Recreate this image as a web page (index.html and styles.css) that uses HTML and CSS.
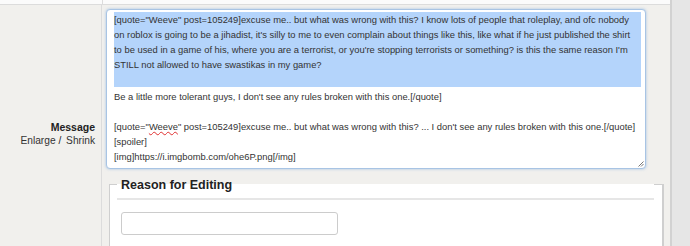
FILE: index.html
```html
<!DOCTYPE html>
<html lang="en">
<head>
  <meta charset="UTF-8">
  <title>Edit post</title>
  <link rel="stylesheet" href="styles.css">
</head>
<body>

<div class="page">
  <div class="form">
    <div class="top-row">
      <div class="top-label"></div>
      <div class="top-field"></div>
    </div>

    <div class="row">
      <div class="label">
        <strong>Message</strong>
        <span class="resize-links"><a>Enlarge</a> / <a class="shrink">Shrink</a></span>
      </div>

      <div class="field">
        <div class="textarea">
          <div class="selection">
            <div class="line">[quote="Weeve" post=105249]excuse me.. but what was wrong with this? I know lots of people that roleplay, and ofc nobody</div>
            <div class="line">on roblox is going to be a jihadist, it's silly to me to even complain about things like this, like what if he just published the shirt</div>
            <div class="line">to be used in a game of his, where you are a terrorist, or you're stopping terrorists or something? is this the same reason I'm</div>
            <div class="line">STILL not allowed to have swastikas in my game?</div>
            <div class="line">&nbsp;</div>
          </div>
          <div class="line">Be a little more tolerant guys, I don't see any rules broken with this one.[/quote]</div>
          <div class="line">&nbsp;</div>
          <div class="line">[quote="<span class="typo">Weeve</span>" post=105249]excuse me.. but what was wrong with this? ... I don't see any rules broken with this one.[/quote]</div>
          <div class="line">[spoiler]</div>
          <div class="line">[img]https://i.imgbomb.com/ohe6P.png[/img]</div>
          <svg class="grip" width="6" height="6" viewBox="0 0 6 6">
            <path d="M0.5 5.5 L5.5 0.5 M3 5.5 L5.5 3" stroke="#777" stroke-width="1" fill="none"/>
          </svg>
        </div>

        <fieldset class="reason">
          <legend>Reason for Editing</legend>
          <input type="text" class="reason-input">
        </fieldset>
      </div>
    </div>
  </div>
  <div class="gutter"></div>
</div>

</body>
</html>
```

FILE: styles.css
```css
body {
  margin: 0;
  font-family: "Liberation Sans", Arial, sans-serif;
  background-color: #e6e6e6;
  color: #333;
}

.page {
  display: flex;
  height: 246px;
  overflow: hidden;
}

.form {
  width: 670px;
  background-color: #f1f0ed;
  border-right: 2px solid #d2d2d2;
}

.top-row {
  display: flex;
  height: 4px;
  background-color: #fbfbfb;
  border-bottom: 1px solid #dcdcdc;
}

.top-label {
  width: 102px;
  border-right: 1px solid #dcdcdc;
}

.row {
  display: grid;
  grid-template-columns: 102px 1fr;
}

.label {
  display: flex;
  flex-direction: column;
  align-items: flex-end;
  padding: 115px 6px 0 0;
  border-right: 1px solid #dcdcdc;
  font-size: 10.5px;
  line-height: 14px;
  color: #222;
}

.resize-links {
  font-size: 10.2px;
}

.resize-links a {
  color: #333;
  cursor: pointer;
}

.shrink {
  margin-left: 2px;
}

.field {
  padding: 4px 0 0 4px;
}

.textarea {
  position: relative;
  box-sizing: border-box;
  width: 540px;
  height: 160px;
  padding: 2px 4px 0 7px;
  background: #fff;
  border: 1px solid #a8c4e4;
  border-radius: 4px;
  box-shadow: 0 0 3px rgba(110, 160, 220, 0.6);
  font-size: 9.4px;
  line-height: 15px;
  color: #333;
  overflow: hidden;
}

.line {
  white-space: nowrap;
}

.selection {
  background-color: #b4d4fb;
  margin-bottom: 2px;
}

.typo {
  text-decoration: underline wavy #e03030;
  text-decoration-thickness: 1px;
}

.grip {
  position: absolute;
  right: 1px;
  bottom: 1px;
}

.reason {
  box-sizing: border-box;
  width: 555px;
  margin: 0 0 0 3px;
  padding: 0 8px 30px 7px;
  background: #fff;
  border: 1px solid #cfcfcf;
  border-right-width: 2px;
  border-bottom: none;
}

.reason legend {
  box-sizing: border-box;
  width: 100%;
  padding: 8px 0 5px 4px;
  border-bottom: 2px solid #e6e6e6;
  font-size: 12.5px;
  font-weight: bold;
  line-height: 16px;
  color: #222;
}

.reason-input {
  display: block;
  box-sizing: border-box;
  width: 217px;
  height: 23px;
  margin: 12px 0 0 4px;
  border: 1px solid #cccccc;
  border-radius: 3px;
  background: #fff;
}

.gutter {
  flex: 1;
  background-color: #e6e6e6;
}
```
